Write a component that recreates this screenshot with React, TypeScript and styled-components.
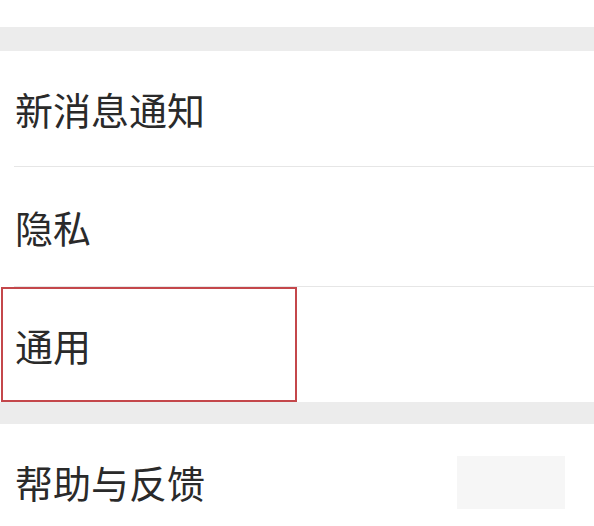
import React from 'react';
import styled, { createGlobalStyle } from 'styled-components';

const GlobalStyle = createGlobalStyle`
    html, body {
        margin: 0;
        padding: 0;
        background: #ffffff;
    }
    body {
        font-family: 'Noto Sans CJK SC', 'Noto Sans', sans-serif;
    }
`;

interface Item {
    label: string;
    marked?: boolean;
}

const mainItems: Item[] = [{ label: '新消息通知' }, { label: '隐私' }, { label: '通用', marked: true }];

const Page = styled.div`
    width: 594px;
    height: 526px;
    overflow: hidden;
    background: #ffffff;
    display: flex;
    flex-direction: column;
    & > * {
        flex-shrink: 0;
    }
`;

const TopSpace = styled.div`
    height: 27px;
    background: #ffffff;
`;

const Gap = styled.div<{ $h: number }>`
    height: ${(p) => p.$h}px;
    background: #ececec;
`;

const Group = styled.div`
    display: flex;
    flex-direction: column;
    background: #ffffff;
    & > * {
        flex-shrink: 0;
    }
`;

const Row = styled.div<{ $h: number }>`
    position: relative;
    height: ${(p) => p.$h}px;
    display: flex;
    align-items: center;
    padding-left: 15px;
`;

const Divider = styled.div`
    height: 1px;
    margin-left: 14px;
    background: #e6e6e6;
`;

const Label = styled.span`
    font-size: 38px;
    line-height: 1;
    color: #2a2a2a;
    letter-spacing: 0;
`;

const Highlight = styled.div`
    position: absolute;
    left: 1px;
    top: 0;
    width: 296px;
    bottom: 0;
    box-sizing: border-box;
    border: 2px solid #c4474b;
    pointer-events: none;
`;

const Blur = styled.div`
    margin-left: auto;
    margin-right: 29px;
    width: 108px;
    height: 53px;
    background: #f6f6f6;
`;

export default function App() {
    return (
        <Page>
            <GlobalStyle />
            <TopSpace />
            <Gap $h={24} />
            <Group>
                {mainItems.map((item, i) => (
                    <React.Fragment key={item.label}>
                        {i > 0 && <Divider />}
                        <Row $h={i === 1 ? 119 : 115}>
                            <Label>{item.label}</Label>
                            {item.marked && <Highlight />}
                        </Row>
                    </React.Fragment>
                ))}
            </Group>
            <Gap $h={22} />
            <Group>
                <Row $h={116}>
                    <Label>帮助与反馈</Label>
                    <Blur />
                </Row>
            </Group>
        </Page>
    );
}
